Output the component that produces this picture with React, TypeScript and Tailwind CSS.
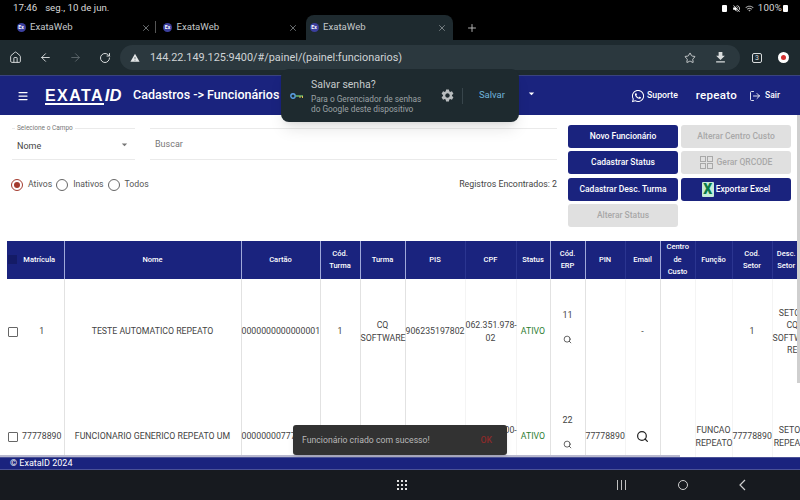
import React from "react";
import { House, ArrowLeft, ArrowRight, RotateCw, Star, LogOut, X, Plus, Search, Menu } from "lucide-react";
import { FaWhatsapp } from "react-icons/fa";
import { MdSettings, MdFileDownload, MdWifi, MdVolumeOff, MdArrowDropDown, MdWarning } from "react-icons/md";

const Favicon = () => (
  <span className="w-[9px] h-[9px] rounded-full bg-[#3b3f9e] text-white text-[5px] leading-[9px] text-center font-bold shrink-0">Ex</span>
);

function Tab({ active, sep }: { active?: boolean; sep?: boolean }) {
  return (
    <div className={`relative w-[146.5px] h-[25px] flex items-center pl-[3.5px] ${active ? "bg-[#1e2a2f] rounded-t-[8px]" : ""}`}>
      <Favicon />
      <span className="ml-[4.5px] text-[9.6px] text-[#c4c8ca] flex-1">ExataWeb</span>
      <X size={10} strokeWidth={1.5} className={`text-[#aab0b3] ${active ? "mr-[5.5px]" : "mr-[8.5px]"}`} />
      {sep && <div className="absolute right-[3.5px] top-[6px] h-[12px] w-px bg-[#555]" />}
    </div>
  );
}

function PillButton({ children, disabled }: { children: React.ReactNode; disabled?: boolean }) {
  return (
    <div className={`h-[23px] rounded-[3px] flex items-center justify-center text-[8.5px] font-medium ${disabled ? "bg-[#e0e0e0] text-[#a8a8a8]" : "bg-[#1a237e] text-white"}`}>
      {children}
    </div>
  );
}

function Radio({ on, label }: { on?: boolean; label: string }) {
  return (
    <div className="flex items-center">
      <span className={`w-[12px] h-[12px] rounded-full border flex items-center justify-center ${on ? "border-[#a33a2e]" : "border-[#666]"}`}>
        {on && <span className="w-[6px] h-[6px] rounded-full bg-[#a33a2e]" />}
      </span>
      <span className="ml-[5px] mr-[4px] text-[8.7px] text-[#555]">{label}</span>
    </div>
  );
}

const widths = [57, 177, 79, 40, 45, 60, 51, 34, 35, 40, 35, 35, 37, 40, 40];
const heads = ["Matrícula", "Nome", "Cartão", "Cód. Turma", "Turma", "PIS", "CPF", "Status", "Cód. ERP", "PIN", "Email", "Centro de Custo", "Função", "Cod. Setor", "Desc. Setor"];
const strong = [true, true, true, true, true, false, false, true, true, false, true, false, false, false, false];
const headPad = ["pl-[8px]", "", "", "px-[6px]", "", "", "", "", "px-[8px]", "", "", "px-[6px]", "", "px-[8px]", "pr-[12px]"];

const Check = () => <span className="absolute left-[1px] top-1/2 -mt-[5px] w-[10px] h-[10px] border border-[#666] rounded-[1px] bg-white" />;

const ErpCell = ({ n }: { n: string }) => (
  <div className="flex flex-col items-center gap-[14px] -mt-[10px]">
    <span className="text-[9px]">{n}</span>
    <Search size={9} strokeWidth={2} className="text-[#333]" />
  </div>
);

function Row({ cells, first }: { cells: React.ReactNode[]; first: React.ReactNode }) {
  return (
    <tr className="h-[105px]">
      {cells.map((c, i) => (
        <td key={i} className={`relative text-center align-middle text-[8.75px] leading-[12.5px] text-[#444] ${i < 14 ? `border-r ${strong[i] ? "border-[#e2e2e2]" : "border-[#f4f4f4]"}` : ""}`}>
          {i === 0 && first}
          {c}
        </td>
      ))}
    </tr>
  );
}

export default function App() {
  return (
    <div className="w-[800px] h-[500px] overflow-hidden flex flex-col bg-black relative" style={{ fontFamily: "Roboto, sans-serif" }}>
      {/* status bar */}
      <div className="h-[15px] flex items-center justify-between pl-[13px] pr-[12px] text-[9.7px] text-[#d8d8d8] shrink-0">
        <span className="flex gap-[8px] pt-[1px]"><span>17:46</span><span>seg., 10 de jun.</span></span>
        <span className="flex items-center gap-[4px] pt-[1px]">
          <span className="w-[5px] h-[7px] bg-white rounded-[1px]" />
          <MdVolumeOff size={9} className="text-white ml-[1px]" />
          <MdWifi size={9} className="text-[#aaa]" />
          <span className="tracking-[0.2px]">100%</span>
          <span className="w-[5px] h-[7px] bg-white rounded-[1px] -ml-[3px]" />
        </span>
      </div>
      {/* tabs */}
      <div className="h-[25px] flex items-center pl-[13px] shrink-0">
        <Tab sep />
        <Tab />
        <Tab active />
        <Plus size={12} strokeWidth={1.75} className="text-[#c8c8c8] ml-[13.5px]" />
      </div>
      {/* toolbar */}
      <div className="h-[35px] bg-[#1e2a2f] flex items-center pl-[9px] shrink-0 text-[#d9dcdd]">
        <House size={13} strokeWidth={1.75} />
        <ArrowLeft size={13} strokeWidth={1.75} className="ml-[17px]" />
        <ArrowRight size={13} strokeWidth={1.75} className="ml-[17px] text-[#5c666b]" />
        <RotateCw size={12} strokeWidth={2} className="ml-[17px]" />
        <div className="ml-[9px] w-[620px] h-[25px] rounded-full bg-[#2b383e] flex items-center pl-[10px] pr-[10px]">
          <MdWarning size={10} className="text-[#e4e6e7]" />
          <span className="ml-[10px] pt-[2px] text-[10.9px] text-[#cfd3d5] flex-1">144.22.149.125:9400/#/painel/(painel:funcionarios)</span>
          <Star size={12} strokeWidth={1.75} className="mr-[17px]" />
          <MdFileDownload size={15} className="mr-[2px]" />
        </div>
        <span className="ml-[12px] w-[10px] h-[10px] border border-[#d9dcdd] rounded-[2px] text-[7px] leading-[8px] text-center">3</span>
        <span className="ml-[16px] w-[11px] h-[11px] rounded-full bg-white flex items-center justify-center">
          <span className="w-[5px] h-[5px] bg-[#d32f2f] rounded-full" />
        </span>
      </div>
      {/* app header */}
      <div className="h-[40px] bg-[#1a237e] border-t border-[#3a437f] flex items-center pl-[17px] pr-[20px] text-white shrink-0">
        <Menu size={12} strokeWidth={2.5} />
        <div className="relative ml-[16px] w-[79px] leading-none whitespace-nowrap" style={{ fontFamily: "'Liberation Sans', sans-serif" }}>
          <span className="text-[16px] font-bold tracking-[1.4px]">EXATA</span>
          <span className="ml-[1px] text-[16.5px] italic font-bold">ID</span>
          <span className="absolute left-0 bottom-[-1px] w-[59px] h-[2px] bg-white" />
        </div>
        <span className="ml-[9px] text-[12.5px] font-medium">Cadastros -&gt; Funcionários</span>
        <span className="flex-1" />
        <FaWhatsapp size={14} />
        <span className="ml-[2px] text-[8.7px] font-medium">Suporte</span>
        <span className="ml-[18px] text-[11.5px] font-medium tracking-[0.3px]">repeato</span>
        <LogOut size={12} strokeWidth={1.75} className="ml-[12px]" />
        <span className="ml-[4px] text-[8.5px] font-medium">Sair</span>
      </div>
      {/* content */}
      <div className="relative flex-1 bg-white overflow-hidden min-h-0">
        <div className="flex pt-[10px] pr-[9px]">
          <div className="flex-1 pl-[12px] pr-[11px] pt-[3px]">
            <div className="flex gap-[15px]">
              <div className="relative w-[123px] h-[32px] border-t border-b border-[#eaeaea] pl-[5px]">
                <span className="absolute left-[3px] -top-[4px] bg-white px-[2px] text-[6.5px] leading-[7px] text-[#777]">Selecione o Campo</span>
                <div className="h-full flex items-center justify-between pt-[5px] pr-[4px] text-[9px] text-[#444]">
                  <span>Nome</span>
                  <MdArrowDropDown size={13} className="text-[#777] -mt-[5px]" />
                </div>
              </div>
              <div className="flex-1 h-[32px] border-t border-b border-[#eaeaea] pl-[5px] pt-[1px] flex items-center text-[9px] text-[#777]">Buscar</div>
            </div>
            <div className="flex items-center justify-between mt-[18px] -ml-[1px]">
              <div className="flex items-center">
                <Radio on label="Ativos" />
                <Radio label="Inativos" />
                <Radio label="Todos" />
              </div>
              <span className="text-[8.8px] text-[#444]">Registros Encontrados: 2</span>
            </div>
          </div>
          <div className="w-[223px] grid grid-cols-2 gap-x-[3px] gap-y-[3.25px] content-start">
            <PillButton>Novo Funcionário</PillButton>
            <PillButton disabled>Alterar Centro Custo</PillButton>
            <PillButton>Cadastrar Status</PillButton>
            <PillButton disabled>
              <span className="grid grid-cols-2 gap-[1px] mr-[4px]">
                <span className="w-[6px] h-[6px] border border-[#a8a8a8]" />
                <span className="w-[6px] h-[6px] border border-[#a8a8a8]" />
                <span className="w-[6px] h-[6px] border border-[#a8a8a8]" />
                <span className="w-[6px] h-[6px] border border-[#a8a8a8]" />
              </span>
              Gerar QRCODE
            </PillButton>
            <PillButton>Cadastrar Desc. Turma</PillButton>
            <PillButton>
              <span className="w-[12px] h-[15px] rounded-[1px] bg-[#c4ecd6] text-[#0b7a45] text-[14px] leading-[15px] font-black text-center mr-[2px]">X</span>
              Exportar Excel
            </PillButton>
            <PillButton disabled>Alterar Status</PillButton>
          </div>
        </div>
        <div className="ml-[7px] mt-[14.25px] w-[805px]">
          <table className="table-fixed border-collapse w-[805px]">
            <colgroup>
              {widths.map((w, i) => <col key={i} className="" style={{ width: w }} />)}
            </colgroup>
            <thead>
              <tr className="h-[38px] bg-[#1a237e] text-white">
                {heads.map((h, i) => (
                  <th key={h} className={`relative text-center align-middle text-[7.5px] leading-[12.5px] font-medium ${headPad[i]} ${i < 14 ? `border-r ${strong[i] ? "border-[#9fa8da]" : "border-[#2b3590]"}` : ""}`}>
                    {i === 0 && <span className="absolute left-[1px] top-[14px] w-[9px] h-[9px] bg-[#141b66]" />}
                    {h}
                  </th>
                ))}
              </tr>
            </thead>
            <tbody>
              <Row
                first={<Check />}
                cells={[
                  <span className="pl-[13px] block">1</span>, "TESTE AUTOMATICO REPEATO", "0000000000000001", "1", "CQ SOFTWARE", "906235197802", "062.351.978-02",
                  <span className="text-[#2e7d32]">ATIVO</span>, <ErpCell n="11" />, "", "-", "", "", "1", "SETOR CQ SOFTWARE RE",
                ]}
              />
              <Row
                first={<Check />}
                cells={[
                  <span className="pl-[13px] block">77778890</span>, "FUNCIONARIO GENERICO REPEATO UM", "0000000077778890", "", "", "", "000.000.000-00",
                  <span className="text-[#2e7d32]">ATIVO</span>, <ErpCell n="22" />, "77778890",
                  <Search size={13} strokeWidth={2.25} className="inline text-[#222]" />, "", "FUNCAO REPEATO", "77778890", "SETOR REPEATO",
                ]}
              />
            </tbody>
          </table>
        </div>
        {/* horizontal scrollbar */}
        <div className="absolute left-0 bottom-0 w-[680px] h-[2px] bg-[#b9b9cf]" />
        {/* vertical scrollbar */}
        <div className="absolute right-0 top-0 w-[3px] h-[268px] bg-[#cfcfcf]" />
        {/* toast */}
        <div className="absolute left-[293px] top-[310px] w-[214px] h-[30px] bg-[#323232] rounded-[3px] shadow-md flex items-center pl-[9px] pt-[1px] text-[8.7px] text-[#b8b8b8]">
          <span className="flex-1">Funcionário criado com sucesso!</span>
          <span className="mr-[15px] text-[#8a2a2a] font-medium">OK</span>
        </div>
      </div>
      {/* footer */}
      <div className="h-[13px] bg-[#1a237e] border-y border-[#4a5196] text-white text-[9px] leading-[11px] pl-[10px] shrink-0">© ExataID 2024</div>
      {/* android nav */}
      <div className="h-[30px] bg-[#171a1f] relative shrink-0 flex items-center text-[#d0d0d0]">
        <div className="ml-[397px] grid grid-cols-3 gap-[2px]">
          {[...Array(9)].map((_, i) => <span key={i} className="w-[2px] h-[2px] bg-[#e0e0e0]" />)}
        </div>
        <div className="ml-[210px] flex gap-[3px]">
          <span className="w-px h-[10px] bg-[#c0c0c0]" /><span className="w-px h-[10px] bg-[#c0c0c0]" /><span className="w-px h-[10px] bg-[#c0c0c0]" />
        </div>
        <span className="ml-[52px] w-[10px] h-[10px] rounded-full border border-[#d0d0d0]" />
        <svg width="8" height="12" viewBox="0 0 8 12" className="ml-[51px]" fill="none" stroke="#d0d0d0" strokeWidth="1.2"><path d="M6 1L1 6l5 5" /></svg>
      </div>
      {/* chrome password popup */}
      <div className="absolute left-[281px] top-[69px] w-[238px] h-[53px] bg-[#1e2a2f] rounded-[8px] shadow-lg flex items-center pl-[9px] pr-[14px] text-[#c6cacc]">
        <svg width="14" height="8" viewBox="0 0 14 8" className="shrink-0">
          <circle cx="3" cy="4" r="2.2" fill="none" stroke="#5aa0e6" strokeWidth="1.4" />
          <path d="M5.5 4H13" stroke="#6cc070" strokeWidth="1.4" />
          <path d="M10 4v2M12.5 4v2" stroke="#e0c050" strokeWidth="1" />
        </svg>
        <div className="ml-[7px] flex-1 pt-[1px]">
          <div className="text-[10.5px] leading-[14px] mb-[2px]">Salvar senha?</div>
          <div className="text-[8.3px] leading-[10.5px] text-[#9ba1a4] whitespace-nowrap">Para o Gerenciador de senhas<br />do Google deste dispositivo</div>
        </div>
        <MdSettings size={15} className="text-[#b8bcbe]" />
        <div className="w-px h-[16px] bg-[#38454b] ml-[7px]" />
        <span className="ml-[16px] text-[9.5px] text-[#6fb3da]">Salvar</span>
      </div>
      <span className="absolute left-[525px] top-[87px] pointer-events-none"><MdArrowDropDown size={13} className="text-white" /></span>
    </div>
  );
}
